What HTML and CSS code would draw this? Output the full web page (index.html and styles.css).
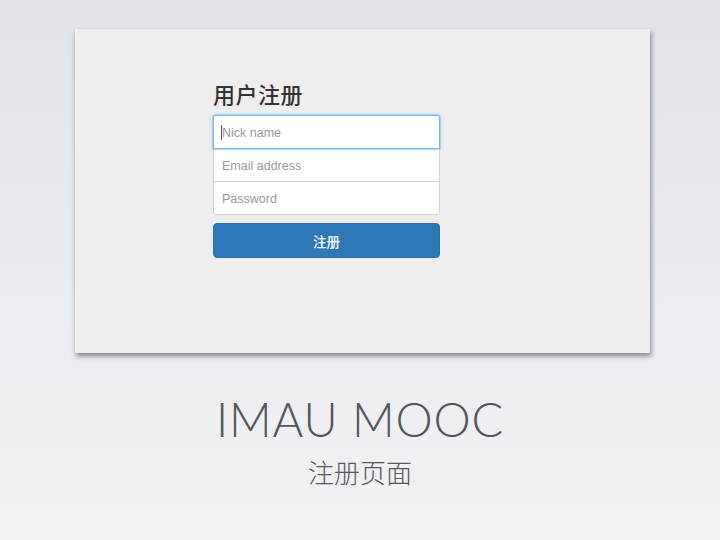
FILE: index.html
```html
<!DOCTYPE html>
<html lang="zh-CN">
<head>
<meta charset="utf-8">
<title>IMAU MOOC</title>
<link rel="stylesheet" href="styles.css">
</head>
<body>
  <div class="slide">
    <div class="card">
      <form class="signup">
        <h2 class="signup-title">用户注册</h2>
        <div class="fields">
          <div class="field">
            <input class="input input-top is-focus" type="text" placeholder="Nick name">
            <span class="caret"></span>
          </div>
          <input class="input input-mid" type="email" placeholder="Email address">
          <input class="input input-bottom" type="password" placeholder="Password">
        </div>
        <button class="btn" type="button">注册</button>
      </form>
    </div>
    <h1 class="brand">IMAU MOOC</h1>
    <p class="subtitle">注册页面</p>
  </div>
</body>
</html>
```

FILE: styles.css
```css
html, body {
  margin: 0;
  padding: 0;
}

body {
  width: 720px;
  height: 540px;
  overflow: hidden;
  background: linear-gradient(to bottom, #dfe3e8 0%, #e9ecf0 55%, #f1f2f5 100%);
  font-family: "Liberation Sans", Arial, sans-serif;
}

.slide {
  display: flex;
  flex-direction: column;
  padding-top: 29px;
}

.card {
  width: 575px;
  height: 324px;
  margin-left: 75px;
  box-sizing: border-box;
  background: #eeeeee;
  box-shadow: 1px 3px 5px rgba(0, 0, 0, 0.45);
  padding: 52px 0 0 138px;
}

.signup {
  width: 227px;
  display: flex;
  flex-direction: column;
}

.signup-title {
  margin: 0 0 10px 0;
  font-family: "Noto Sans CJK SC", sans-serif;
  font-size: 22px;
  line-height: 24px;
  font-weight: 500;
  color: #333333;
  letter-spacing: 0.5px;
}

.fields {
  display: flex;
  flex-direction: column;
}

.field {
  position: relative;
  display: flex;
}

.input {
  width: 227px;
  height: 34px;
  box-sizing: border-box;
  margin: 0;
  padding: 1px 8px 0 8px;
  border: 1px solid #d4d4d4;
  background: #ffffff;
  font-family: "Liberation Sans", Arial, sans-serif;
  font-size: 12.5px;
  color: #555;
  outline: none;
}

.input::placeholder {
  color: #999999;
}

.input-top {
  border-radius: 3px 3px 0 0;
}

.input-mid {
  margin-top: -1px;
  border-radius: 0;
}

.input-bottom {
  margin-top: -1px;
  border-radius: 0 0 3px 3px;
}

.is-focus {
  position: relative;
  z-index: 1;
  border-color: #7fb6e6;
  box-shadow: 0 0 0 1px rgba(102, 175, 233, 0.35), 0 0 4px rgba(102, 175, 233, 0.45);
}

.caret {
  position: absolute;
  left: 8px;
  top: 10px;
  width: 1px;
  height: 15px;
  background: #555;
  z-index: 2;
}

.btn {
  margin-top: 8px;
  height: 35px;
  width: 227px;
  border: 1px solid #2b6fad;
  border-radius: 4px;
  background: #2e78b8;
  color: #ffffff;
  font-family: "Noto Sans CJK SC", sans-serif;
  font-size: 13.5px;
  font-weight: 500;
  padding: 0;
}

.brand {
  margin: 38px 0 0 0;
  text-align: center;
  font-family: Lato, "Liberation Sans", sans-serif;
  font-weight: 300;
  font-size: 47px;
  line-height: 56px;
  letter-spacing: 0.8px;
  color: #555555;
}

.subtitle {
  margin: 10px 0 0 0;
  text-align: center;
  font-family: "Noto Sans CJK SC", sans-serif;
  font-weight: 300;
  font-size: 26px;
  line-height: 30px;
  color: #595959;
}
```
